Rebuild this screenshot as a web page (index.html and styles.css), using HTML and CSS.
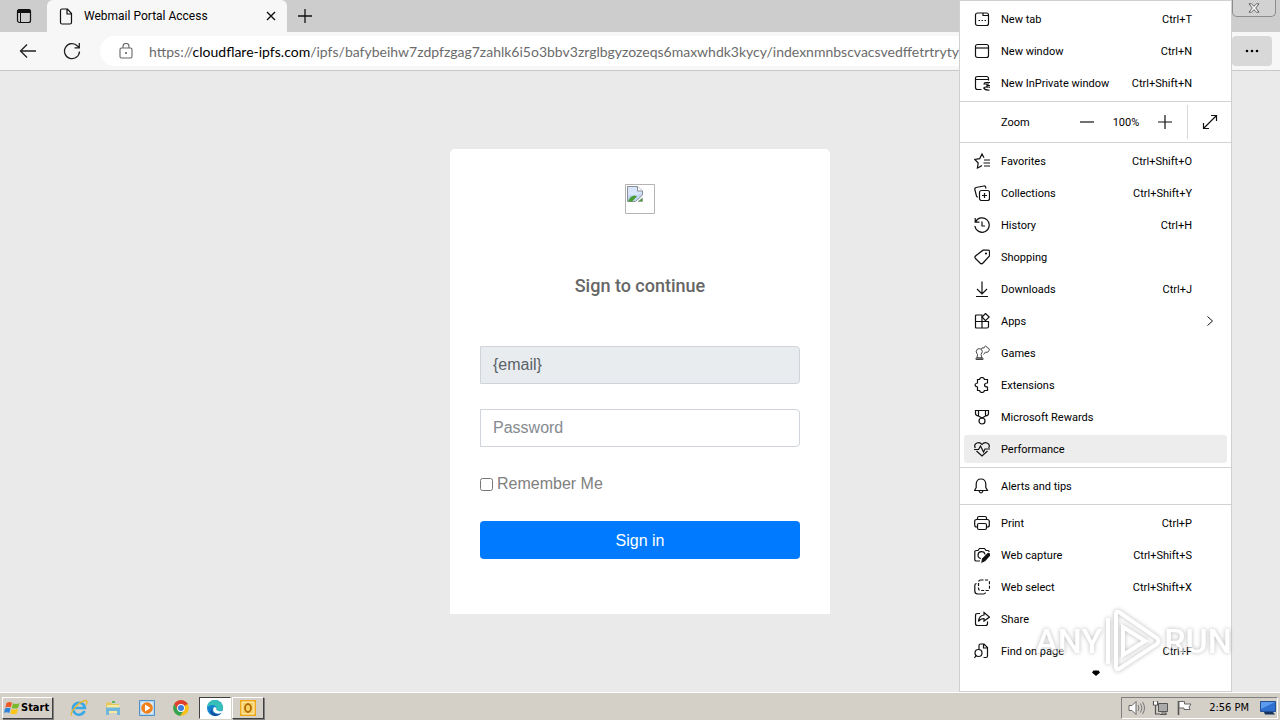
FILE: index.html
```html
<!DOCTYPE html>
<html lang="en">
<head>
<meta charset="utf-8">
<title>Webmail Portal Access</title>
<link rel="stylesheet" href="styles.css">
</head>
<body>
<div class="desktop">
  <div class="browser">
    <header class="tabstrip">
      <button class="tab-actions" aria-label="Tab actions">
        <svg width="16" height="16" viewBox="0 0 16 16"><rect x="1.5" y="1.5" width="13" height="13" rx="2" fill="none" stroke="#111" stroke-width="1.2"/><path d="M1.500 2.500q0-1 1-1h11q1 0 1 1V5h-13z" fill="#111"/><path d="M4.500 5v9" stroke="#111" fill="none"/></svg>
      </button>
      <div class="tab">
        <svg class="tab-icon" width="14" height="17" viewBox="0 0 14 17"><path d="M1.500 2.500q0-1.500 1.500-1.500h5.500l4 4.500v9q0 1.500-1.500 1.500H3q-1.500 0-1.500-1.500zM8 1v5h4.500" fill="none" stroke="#111" stroke-width="1.200"/></svg>
        <span class="tab-title">Webmail Portal Access</span>
        <button class="icon-btn" aria-label="Close tab"><svg width="10" height="10" viewBox="0 0 10 10"><path d="M1 1l8 8M9 1L1 9" stroke="#111" stroke-width="1.400"/></svg></button>
      </div>
      <button class="icon-btn new-tab" aria-label="New tab"><svg width="16" height="16" viewBox="0 0 16 16"><path d="M8 1v14M1 8h14" stroke="#111" stroke-width="1.300"/></svg></button>
      <button class="window-close" aria-label="Close window"><svg width="12" height="10" viewBox="0 0 12 10"><path d="M1 .8h2.600L6 3.400 8.400.8H11L7.700 5 11 9.200H8.400L6 6.600 3.600 9.200H1L4.300 5z" fill="#fafafa" stroke="#555" stroke-width=".9"/></svg></button>
    </header>
    <div class="toolbar">
      <button class="icon-btn back" aria-label="Back"><svg width="18" height="16" viewBox="0 0 18 16"><path d="M17 8H1.500M8 1.500L1.500 8 8 14.500" fill="none" stroke="#222" stroke-width="1.300"/></svg></button>
      <button class="icon-btn reload" aria-label="Refresh"><svg width="18" height="18" viewBox="0 0 18 18"><path d="M16.500 9.500A7.500 7.500 0 1 1 14.500 4l1.500 1.500M16.300 1v4.800h-4.800" fill="none" stroke="#222" stroke-width="1.300"/></svg></button>
      <div class="address">
        <svg class="lock" width="14" height="16" viewBox="0 0 14 16"><rect x="1" y="5" width="12" height="10" rx="1.500" fill="none" stroke="#666" stroke-width="1.100"/><path d="M4 5V3.500a3 3 0 0 1 6 0V5" fill="none" stroke="#666" stroke-width="1.100"/><circle cx="7" cy="10" r="1" fill="#555"/></svg>
        <div class="url" role="textbox" aria-label="Address">https://<span class="host">cloudflare-ipfs.com</span>/ipfs/bafybeihw7zdpfzgag7zahlk6i5o3bbv3zrglbgyzozeqs6maxwhdk3kycy/indexnmnbscvacsvedffetrtryty.html</div>
      </div>
      <button class="more" aria-label="Settings and more"><svg width="14" height="4" viewBox="0 0 14 4"><circle cx="2" cy="2" r="1.300"/><circle cx="7" cy="2" r="1.300"/><circle cx="12" cy="2" r="1.300"/></svg></button>
    </div>
    <main class="page">
      <form class="card">
        <svg class="broken" width="30" height="30" viewBox="0 0 30 30"><path d="M.5.5h29v29H.5z" fill="#fff" stroke="#b4b4b4"/><path d="M2.500 2.500h10l5 4.500v4l-7 6.500h-8z" fill="#c3d6f5" stroke="#8a8f96"/><path d="M3 3h9.500v4.500H17V9l-5 2H3z" fill="#d9e5fa"/><path d="M3 17.500q2-6 7-6l2 1-5 5z" fill="#4a9d35"/><path d="M12.500 2.500v4.500h5" fill="#fff" stroke="#8a8f96"/><path d="M17.500 14v3.500H13z" fill="#4a9d35" stroke="#8a8f96" stroke-width=".6"/></svg>
        <h1 class="card-title">Sign to continue</h1>
        <input class="field field-readonly" type="text" value="{email}" aria-label="Email" readonly>
        <input class="field" type="password" placeholder="Password" aria-label="Password">
        <label class="remember"><input class="check" type="checkbox">Remember Me</label>
        <button class="submit" type="button">Sign in</button>
      </form>
    </main>
  </div>

  <footer class="taskbar">
    <button class="start">
      <svg width="17" height="16" viewBox="0 0 17 16"><path d="M2.500 3Q5.500 1 8 2.800L6.800 7.500Q4 6 1.300 7.700z" fill="#ee5a24"/><path d="M9 3.200q3 1.500 6.500-.2L14.200 7.700Q11 9.300 7.800 7.900z" fill="#7ab929"/><path d="M1 8.600q3-1.600 5.600-.1L5.300 13Q2.600 11.600 0 13z" fill="#2f86d8"/><path d="M7.600 8.900q3 1.500 6.400-.1L12.700 13.500Q9.500 15 6.300 13.600z" fill="#fbc416"/></svg>Start
    </button>
    <div class="launchers">
      <button class="launch" aria-label="Internet Explorer"><svg width="18" height="18" viewBox="0 0 18 18"><path d="M14.500 12a6 6 0 1 1 .4-3H5" fill="none" stroke="#39a8e6" stroke-width="2.600"/><path d="M1.500 16.500C-.5 13 10 1.500 16 1.500q2 .5 0 4.500" fill="none" stroke="#e8b830" stroke-width="1.300"/></svg></button>
      <button class="launch" aria-label="Explorer"><svg width="18" height="18" viewBox="0 0 18 18"><path d="M2 3.500h5l1 1.500h7v9H2z" fill="#e8c75a"/><path d="M3 6h12.500v8H3z" fill="#f8e9a0"/><path d="M2 8.500h14V16h-3v-4H5v4H2z" fill="#6fb7dd"/><path d="M8 2h3v2H8z" fill="#5cb85c"/></svg></button>
      <button class="launch" aria-label="Media Player"><svg width="18" height="18" viewBox="0 0 18 18"><path d="M1.500 1.500h15v15h-15z" fill="#b9d9f2" stroke="#4e8fc8"/><path d="M3.500 3.500h11v11h-11z" fill="#e9f3fb"/><circle cx="9" cy="9" r="5.800" fill="#f08019"/><path d="M7 5.500l5.500 3.500L7 12.500z" fill="#fff"/></svg></button>
      <button class="launch" aria-label="Chrome"><svg width="18" height="18" viewBox="0 0 18 18"><circle cx="9" cy="9" r="7.800" fill="#fbc116"/><path d="M9 9L2.300 5A7.800 7.800 0 0 1 15.700 5z" fill="#df4030"/><path d="M9 5h6.700A7.800 7.800 0 0 0 2.300 5l3.300 6z" fill="#df4030"/><path d="M2.300 5a7.800 7.800 0 0 0 6 11.800L12 11l-6.500 0z" fill="#35a352"/><circle cx="9" cy="9" r="3.900" fill="#fff"/><circle cx="9" cy="9" r="3" fill="#3d7de0"/></svg></button>
      <button class="task task-active" aria-label="Microsoft Edge"><svg width="18" height="18" viewBox="0 0 18 18"><circle cx="9" cy="9" r="8" fill="#1583cf"/><path d="M1.100 8.500A8 8 0 0 1 17 8q.3 4-4 4-3 0-2.500-1.500.8-1.500-1-3.500-3.500-2.500-8.400 1.500z" fill="#35c1b8"/><path d="M6 9.500q-.5 5 5.500 5.800 2 .2 4-1A8 8 0 0 1 8 16.900Q2 14 6 9.500z" fill="#134f9c"/><path d="M8 8q-2.500 4 1.500 6 3.500 1.500 6.500-.5l1.500-2q-2 1.200-5 .5-3-.8-2-2.500Q10.500 8 8 8z" fill="#fff"/></svg></button>
      <button class="task" aria-label="Outlook"><svg width="18" height="18" viewBox="0 0 18 18"><path d="M1 1h16v16H1z" fill="#f0a818"/><path d="M3 3h12v12H3z" fill="#f7d069" stroke="#fff3c4"/><ellipse cx="9" cy="9" rx="3" ry="4" fill="none" stroke="#b06c00" stroke-width="1.800"/></svg></button>
    </div>
    <div class="tray">
      <svg width="17" height="16" viewBox="0 0 17 16"><path d="M1 5.500h3l4-4v13l-4-4H1z" fill="#fff" stroke="#666"/><path d="M10 5q2 3 0 6M12.500 3.500q3 4.500 0 9M14.500 2q4 6 0 12" fill="none" stroke="#777"/></svg>
      <svg width="17" height="16" viewBox="0 0 17 16"><path d="M6.500 3.500h9v8h-9z" fill="#aaa" stroke="#555"/><path d="M9 13h5v1.500H8M1.500 1v4h4V1M3.500 5v9H8" fill="none" stroke="#555" stroke-width="1.200"/><path d="M2 2h3v2.500H2z" fill="#fff"/></svg>
      <svg width="17" height="16" viewBox="0 0 17 16"><path d="M2.500 1v14" stroke="#555" stroke-width="1.600"/><path d="M3 1.500h5.500V4H15l-2 3 1 2.500H8V8H3z" fill="#fff" stroke="#666"/></svg>
      <time class="clock">2:56 PM</time>
      <svg width="16" height="14" viewBox="0 0 16 14"><path d="M.5.500h15v10H.5z" fill="#2f6fd0" stroke="#24508f"/><path d="M1 1h14L1 8z" fill="#5b9cf0"/><path d="M4 11h9l2 2.500H5z" fill="#16335e"/></svg>
    </div>
  </footer>

  <nav class="menu" aria-label="Settings and more">
    <div class="group">
      <button class="item"><svg class="ico" viewBox="0 0 16 16"><rect x="1.500" y="2" width="13" height="12.500" rx="2"/><path d="M9 2v2.500h5.500M4.500 9.500h1.500M7.500 9.500h1.500M10.500 9.500h1.500"/></svg><span>New tab</span><kbd>Ctrl+T</kbd></button>
      <button class="item"><svg class="ico" viewBox="0 0 16 16"><rect x="1.500" y="1.500" width="13" height="13" rx="2"/><path d="M1.500 5h13"/></svg><span>New window</span><kbd>Ctrl+N</kbd></button>
      <button class="item"><svg class="ico" viewBox="0 0 16 16"><path d="M7.500 14.500h-4q-2 0-2-2v-9q0-2 2-2h9q2 0 2 2V5.500M1.500 4.500h13M16 7.500h-4q-2 0-2 1.500h5M16 10.500h-3M10 12.500q4-1.500 6 0M9.500 12.500q1 3 6 2.500M13 8.800v4"/></svg><span>New InPrivate window</span><kbd>Ctrl+Shift+N</kbd></button>
    </div>
    <div class="zoom-row">
      <span class="zoom-label">Zoom</span>
      <button class="icon-btn" aria-label="Zoom out"><svg class="ico" viewBox="0 0 16 16"><path d="M1 8h14"/></svg></button>
      <span class="zoom-value">100%</span>
      <button class="icon-btn" aria-label="Zoom in"><svg class="ico" viewBox="0 0 16 16"><path d="M1 8h14M8 1v14"/></svg></button>
      <button class="icon-btn fullscreen" aria-label="Full screen"><svg class="ico" viewBox="0 0 16 16"><path d="M1.500 14.500l13-13M9 1.500h5.500V7M1.500 9v5.500H7"/></svg></button>
    </div>
    <div class="group">
      <button class="item"><svg class="ico" viewBox="0 0 16 16"><path d="M4.500 14.500L3.400 15l.8-5L.8 6.400l4.900-.8L8 1l2 3.800M4.200 14.800L8 12.500M10 7h6M9.500 10h6.500M10 13h6"/></svg><span>Favorites</span><kbd>Ctrl+Shift+O</kbd></button>
      <button class="item"><svg class="ico" viewBox="0 0 16 16"><rect x="5.500" y="5.500" width="10" height="10" rx="2"/><path d="M10.500 8v5M8 10.500h5M12 3.500L11.500 1.800q-.5-1-1.500-.8L2 2.500Q.5 3 .8 4.500L2.500 11q.3 1 1.300.8"/></svg><span>Collections</span><kbd>Ctrl+Shift+Y</kbd></button>
      <button class="item"><svg class="ico" viewBox="0 0 16 16"><path d="M1.500 5a7.200 7.200 0 1 1-.6 4M1.200 1v4.200h4.300M8 4.500V9h3"/></svg><span>History</span><kbd>Ctrl+H</kbd></button>
      <button class="item"><svg class="ico" viewBox="0 0 16 16"><path d="M9 1.200l5-.2q1.500 0 1.500 1.500v4.500L9 14q-1.500 1.500-3 0L1.500 9.500q-1.200-1.200 0-2.500z"/><circle cx="12" cy="4.500" r=".5"/></svg><span>Shopping</span></button>
      <button class="item"><svg class="ico" viewBox="0 0 16 16"><path d="M8 .5v12M3 8l5 5 5-5M2 15.500h12"/></svg><span>Downloads</span><kbd>Ctrl+J</kbd></button>
      <button class="item"><svg class="ico" viewBox="0 0 16 16"><path d="M8 15H2.500Q1.500 15 1.500 14V3q0-1 1-1H8v13h5q1.500 0 1.500-1.500v-5h-13"/><path d="M11.500.5l3.700 3.500-3.700 3.600L8 4z"/></svg><span>Apps</span><svg class="chevron" viewBox="0 0 8 12"><path d="M1.500 1.500L6.500 6l-5 4.500"/></svg></button>
      <button class="item"><svg class="ico ico-soft" viewBox="0 0 16 16"><path d="M3.500 9.500Q1 6.500 3 4.500q2-2 4.500 0Q9.500 6.500 7 9.500L8 13H3zM2 13h7v1.500H2zM7.500 4Q7.500 2 10 3q1.500-4 3.500 0 3 .5 1 3.500-1.500 1.500-3 .5L9.500 9.500"/></svg><span>Games</span></button>
      <button class="item"><svg class="ico" viewBox="0 0 16 16"><path d="M3.500 2.500h2q.5-2 2.500-2t2.500 2h3v3.500q-3 0-3 2t3 2v3.500h-3q-.5 2-2.500 2t-2.500-2h-2V10q-2.500-.5-2.500-2t2.500-2z"/></svg><span>Extensions</span></button>
      <button class="item"><svg class="ico" viewBox="0 0 16 16"><path d="M1.500 1.500h13v3q0 2-3 2.500L8 9 4.500 7q-3-.5-3-2.500zM4.500 1.500v5M11.500 1.500v5"/><circle cx="8" cy="12" r="3"/></svg><span>Microsoft Rewards</span></button>
      <button class="item item-hover"><svg class="ico" viewBox="0 0 16 16"><path d="M1.300 7Q-.5 3.500 3 2q3-1 5 1.500Q10 1 13 2q3.500 1.500 1.700 5M2.500 10L8 15l5.500-5M0 8.500h4.500L6.500 5l3 6 1.500-3h5"/></svg><span>Performance</span></button>
    </div>
    <div class="group">
      <button class="item"><svg class="ico" viewBox="0 0 16 16"><path d="M.5 12.500L2.200 9.500V6q.3-5 4.800-5t4.800 5v3.500l1.700 3zM5 13q2 4 4 0"/></svg><span>Alerts and tips</span></button>
    </div>
    <div class="group group-last">
      <button class="item"><svg class="ico" viewBox="0 0 16 16"><path d="M3.500 4.500V3q0-1.500 1.500-1.500h6q1.500 0 1.500 1.500v1.500M3.500 12h-1Q.7 12 .7 10V6.500q0-2 2-2h10.600q2 0 2 2V10q0 2-1.800 2h-1"/><rect x="3.500" y="8.500" width="9" height="6" rx="1.500"/></svg><span>Print</span><kbd>Ctrl+P</kbd></button>
      <button class="item"><svg class="ico" viewBox="0 0 16 16"><path d="M6 14H2.500q-1.700 0-1.700-1.500v-8Q.8 3.500 2.500 3.500H4L5.500 1.500h5L12 3.500h1.500q1.700 0 1.700 1.500M7 11.500a3.500 3.500 0 1 1 4-4"/><path d="M8 15l.5-3 5.500-5.500q1.500-.5 1.800 1.500L11 13.500z" fill="#111"/></svg><span>Web capture</span><kbd>Ctrl+Shift+S</kbd></button>
      <button class="item"><svg class="ico" viewBox="0 0 16 16"><rect x="4.500" y="1" width="11" height="10.500" rx="2" stroke-dasharray="3 1.500"/><path d="M2.500 4.500Q.8 4.800.8 6.500v5.500q0 3 3 3h5.500q2 0 2.200-1.500"/></svg><span>Web select</span><kbd>Ctrl+Shift+X</kbd></button>
      <button class="item"><svg class="ico" viewBox="0 0 16 16"><path d="M6 2.500H3.500q-2 0-2 2v8q0 2 2 2h8q2 0 2-2V10.500"/><path d="M10 1.500L15.500 6 10 10V7.500Q6.500 7.500 4.500 10.500q.5-6 5.500-6.500z"/></svg><span>Share</span></button>
      <button class="item"><svg class="ico" viewBox="0 0 16 16"><path d="M5 6V2.500Q5 1 6.500 1H10l3.500 3.500V13q0 1.500-1.500 1.500H9.500M9.500 1v4h4"/><circle cx="4.500" cy="10" r="3.500"/><path d="M2 12.500L.5 15"/></svg><span>Find on page</span><kbd>Ctrl+F</kbd></button>
    </div>
    <svg class="scroll-more" viewBox="0 0 8 6"><path d="M1.500.5h5l1.500 2-4 3.500-4-3.500z"/></svg>
  </nav>

  <div class="watermark">
    <span>ANY</span>
    <svg width="58" height="64" viewBox="0 0 58 64"><path d="M4 9v46M12 4v54q0 3 3 2l38-25q3-3 0-6L15 3q-3-1-3 1zM19 18v28l22-14z" fill="none" stroke="#fff" stroke-width="4"/></svg>
    <span>RUN</span>
  </div>
</div>
</body>
</html>
```
FILE: styles.css
```css
* { box-sizing: border-box; }
body { margin: 0; font-family: Roboto, "Noto Sans", sans-serif; color: #000; }
button { font: inherit; color: inherit; border: 0; background: none; padding: 0; margin: 0; }
svg { display: block; flex: none; }
.desktop { position: relative; display: flex; flex-direction: column; min-height: 100vh; overflow: hidden; background: #eaeaea; }
.browser { flex: 1; display: flex; flex-direction: column; min-width: 0; }
.icon-btn { display: flex; align-items: center; justify-content: center; }

.tabstrip { display: flex; height: 32px; background: #cdcdcd; }
.tab-actions { display: flex; align-items: center; justify-content: center; width: 47px; }
.tab { display: flex; align-items: center; width: 240px; padding: 0 11px 0 12px; background: #f7f7f7; border-radius: 6px 6px 0 0; }
.tab-title { flex: 1; margin-left: 11px; font-size: 12px; white-space: nowrap; }
.new-tab { width: 36px; }
.window-close { display: flex; align-items: center; justify-content: center; width: 44px; height: 17px; margin-left: auto; margin-right: 4px; border: 1px solid #8c8c8c; border-top: 0; border-radius: 0 0 5px 5px; background: #d2d2d2; }

.toolbar { display: flex; align-items: center; height: 39px; padding-right: 8px; background: #f7f7f7; border-bottom: 1px solid #c8c8c8; }
.back { width: 56px; }
.reload { width: 32px; }
.address { flex: 1; display: flex; align-items: center; min-width: 0; height: 30px; margin: 0 12px; padding-left: 19px; border-radius: 15px; background: #fff; }
.url { flex: 1; min-width: 0; margin-left: 16px; overflow: hidden; white-space: nowrap; font-family: Lato, "Noto Sans", sans-serif; font-size: 14px; color: #6b6b6b; }
.host { color: #000; }
.more { display: flex; align-items: center; justify-content: center; width: 40px; height: 30px; border-radius: 4px; background: #d8d8d8; }

.page { flex: 1; display: flex; justify-content: center; align-items: flex-start; padding: 78px 16px; font-family: "Liberation Sans", Arial, sans-serif; }
.card { display: flex; flex-direction: column; width: 100%; max-width: 380px; padding: 35px 30px 55px; border-radius: 5px 5px 0 0; background: #fff; }
.broken { align-self: center; }
.card-title { margin: 60px 0 48px; font: 500 18px/24px Roboto, sans-serif; text-align: center; color: #666; }
.field { width: 100%; height: 38px; margin: 0 0 25px; padding: 6px 12px; border: 1px solid #ced4da; border-radius: 0 4px 4px 0; background: #fff; font: 16px/24px "Liberation Sans", Arial, sans-serif; color: #5a6268; }
.field::placeholder { color: #858a90; }
.field-readonly { background: #e9ecef; }
.remember { display: flex; align-items: center; gap: 4px; height: 24px; margin-bottom: 25px; font-size: 16px; line-height: 20px; color: #808080; }
.check { width: 13px; height: 13px; margin: 0; }
.submit { height: 38px; padding-top: 2px; border-radius: 4px; background: #007bff; color: #fff; font-size: 16px; }

.taskbar { display: flex; align-items: center; height: 28px; padding: 2px 2px 0; background: #d4d0c8; border-top: 1px solid #fff; }
.start, .task { border: 1px solid; border-color: #fff #404040 #404040 #fff; box-shadow: 1px 1px 0 #808080; }
.start { display: flex; align-items: center; width: 51px; height: 22px; padding-left: 1px; font: bold 11px "DejaVu Sans Condensed", sans-serif; }
.launchers { display: flex; align-items: center; margin-left: 9px; }
.launch, .task { display: flex; align-items: center; justify-content: center; width: 34px; height: 22px; }
.task { width: 32px; margin-left: 1px; }
.task-active { background: #fff; border-color: #404040 #fff #fff #404040; box-shadow: none; }
.tray { display: flex; align-items: center; gap: 7px; height: 22px; margin-left: auto; padding: 0 1px 0 6px; border: 1px solid; border-color: #808080 #fff #fff #808080; }
.clock { margin: 0 4px 0 9px; font: 11px "DejaVu Sans Condensed", sans-serif; }

.menu { position: absolute; top: 0; right: 48px; bottom: 28px; width: 273px; border: 1px solid #d0d0d0; background: #fff; font-size: 11px; }
.group { display: flex; flex-direction: column; gap: 4px; padding: 4px; border-bottom: 1px solid #d2d2d2; }
.group-last { border-bottom: 0; }
.item { display: flex; align-items: center; height: 28px; padding: 0 35px 0 10px; border-radius: 3px; text-align: left; }
.item span { flex: 1; margin-left: 11px; white-space: nowrap; }
.item kbd { font: inherit; }
.item-hover { background: #ededed; }
.ico { width: 16px; height: 16px; fill: none; stroke: #111; stroke-width: 1.2; }
.ico-soft { stroke: #444; stroke-width: 1; }
.chevron { width: 8px; height: 12px; margin-right: -22px; fill: none; stroke: #111; }
.zoom-row { display: flex; align-items: center; height: 41px; padding-left: 41px; border-bottom: 1px solid #d2d2d2; }
.zoom-label { flex: 1; }
.zoom-value { width: 62px; text-align: center; }
.fullscreen { width: 44px; height: 34px; margin-left: 14px; border-left: 1px solid #d8d8d8; }
.scroll-more { width: 8px; height: 6px; margin: 1px auto 0; }

.watermark { position: absolute; right: 48px; bottom: 47px; display: flex; align-items: center; gap: 2px; font: 500 34px Roboto, sans-serif; color: #fff; opacity: .6; filter: drop-shadow(0 0 2px #888); pointer-events: none; }
```
